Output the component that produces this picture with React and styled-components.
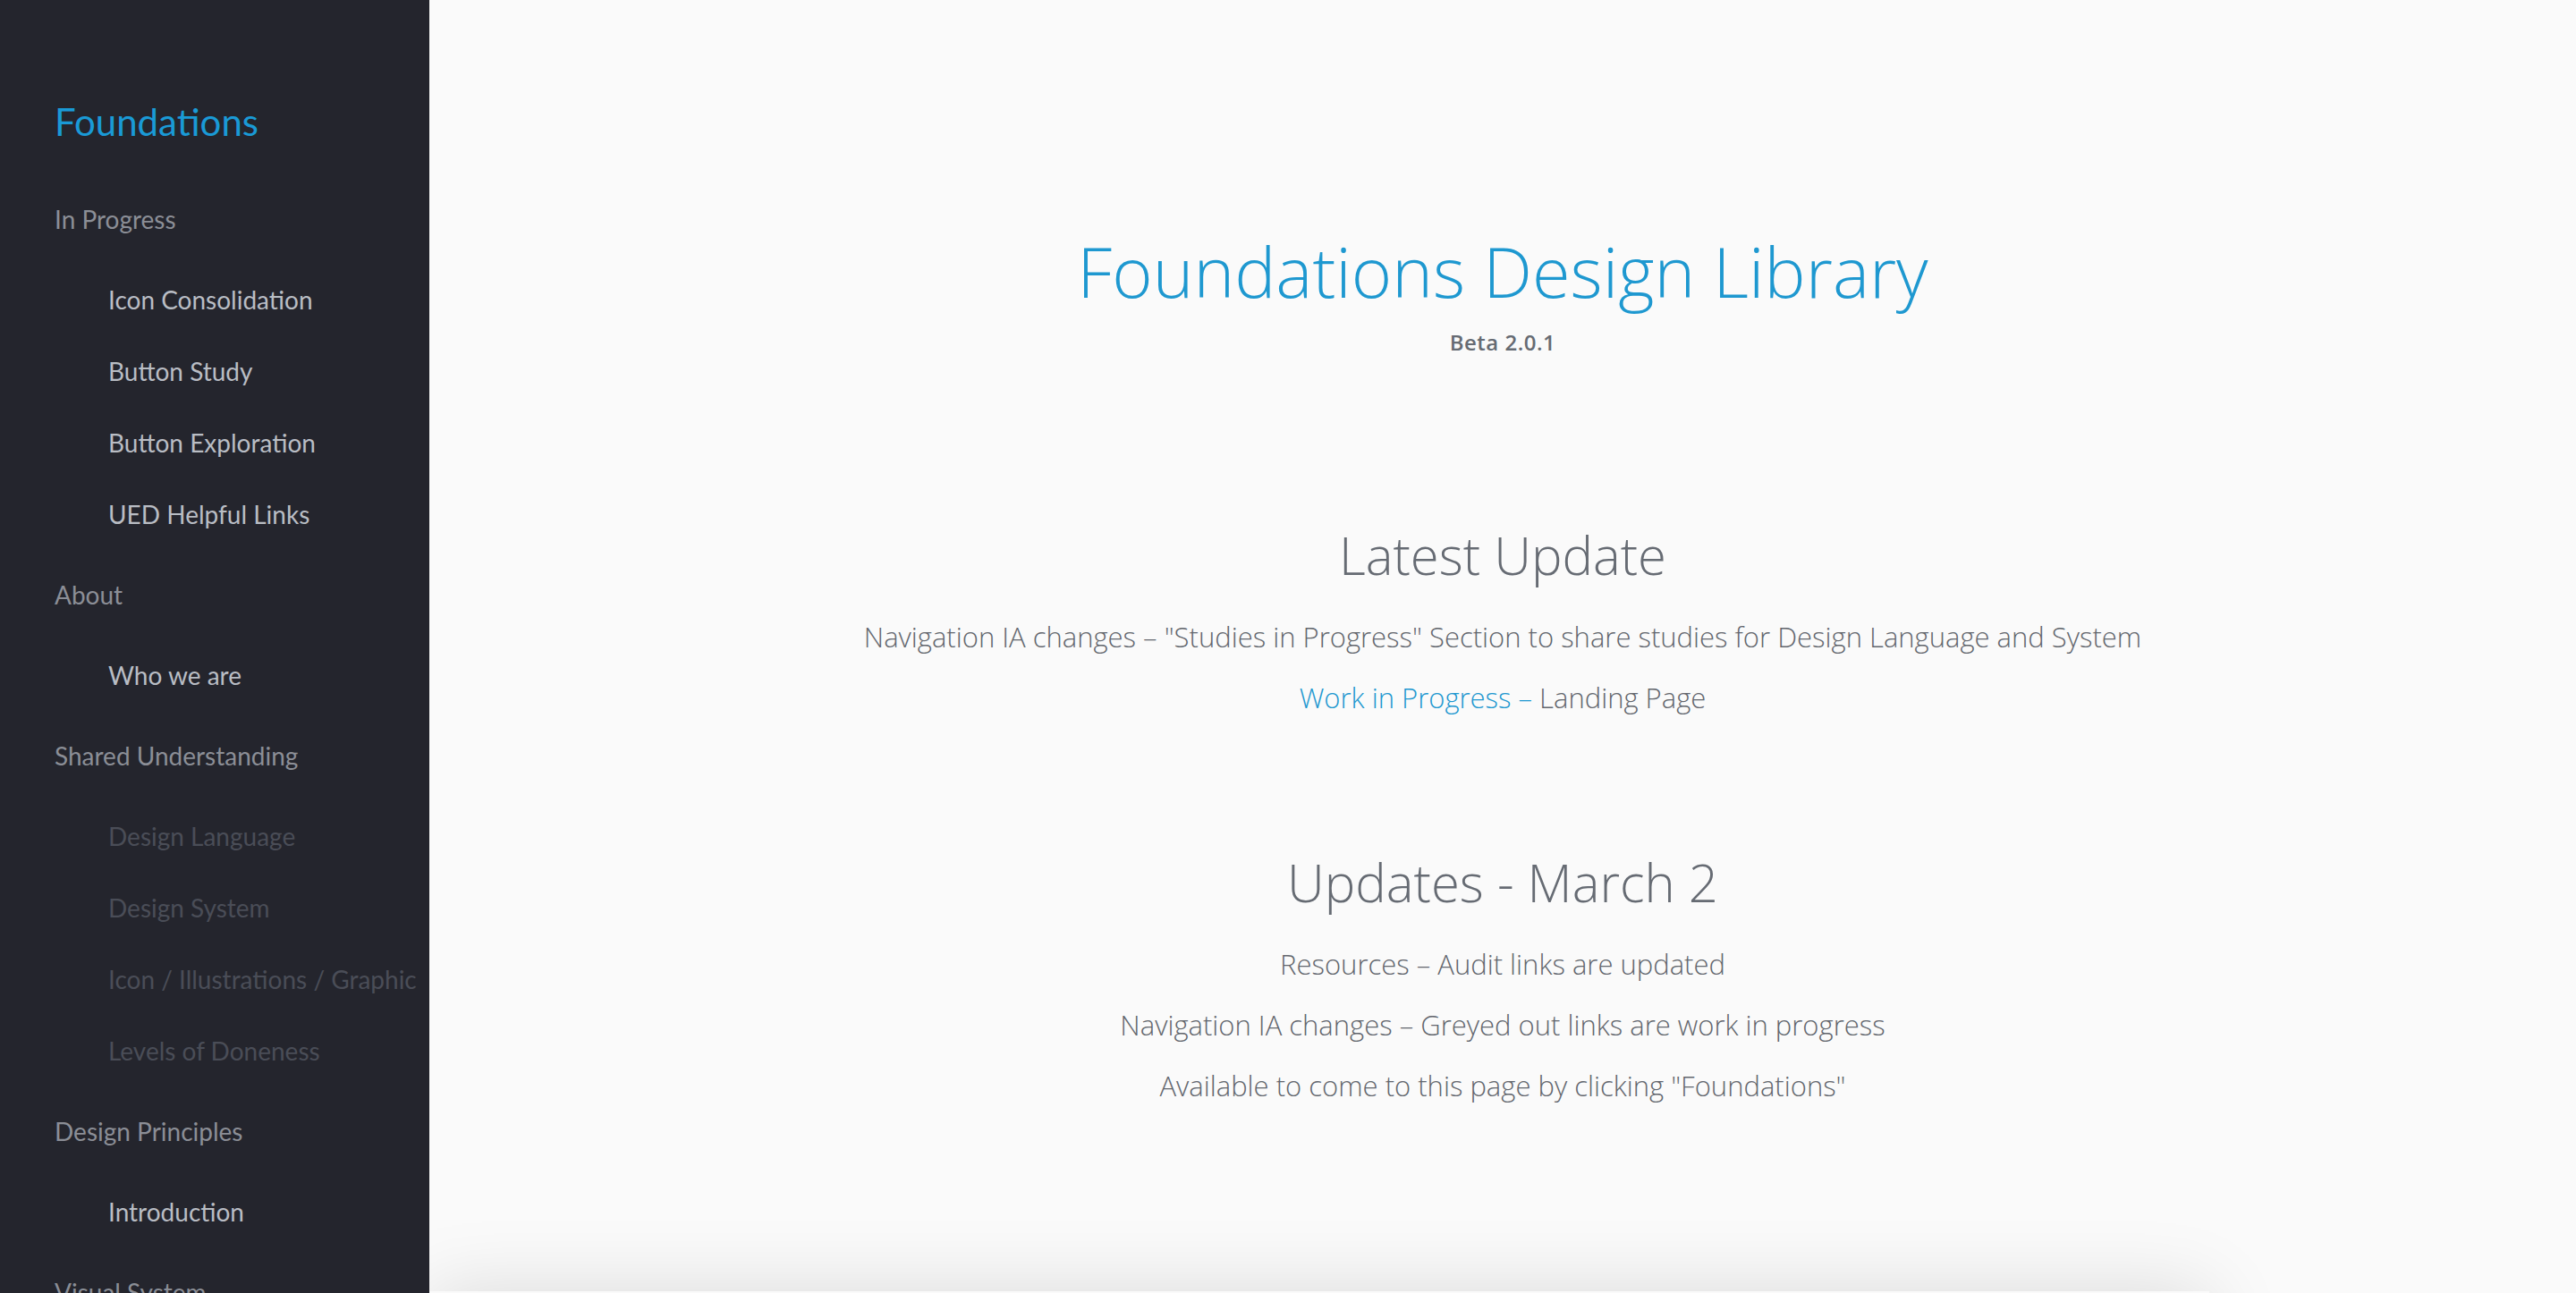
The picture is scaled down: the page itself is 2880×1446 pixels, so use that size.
import React from "react";
import styled, { createGlobalStyle } from "styled-components";

const Global = createGlobalStyle`
  html, body { margin: 0; padding: 0; }
  body { background: #fafafa; font-family: "Open Sans", Lato, sans-serif; }
  * { box-sizing: border-box; }
`;

const Layout = styled.div`
  display: flex;
  width: 100%;
  height: 100vh;
  overflow: hidden;
`;

const Sidebar = styled.nav`
  flex: 0 0 480px;
  height: 100%;
  overflow: hidden;
  background: #24252d;
  padding: 106px 0 0 61px;
  position: relative;
  z-index: 1;
`;

const Brand = styled.div`
  font-family: Lato, "Open Sans", sans-serif;
  font-size: 42px;
  line-height: 60px;
  color: #1a9ad6;
  margin-bottom: 29px;
`;

const NavGroup = styled.div`
  display: flex;
  flex-direction: column;
`;

const NavHeader = styled.div`
  font-family: Lato, "Open Sans", sans-serif;
  font-size: 28px;
  line-height: 100px;
  color: #8b8e96;
  white-space: nowrap;
`;

const NavItem = styled.div`
  font-family: Lato, "Open Sans", sans-serif;
  font-size: 28px;
  line-height: 80px;
  padding-left: 60px;
  white-space: nowrap;
  color: ${(p) => (p.$disabled ? "#4a4d57" : "#b9bdc4")};
`;

const Main = styled.main`
  flex: 1;
  height: 100%;
  overflow: hidden;
  display: flex;
  flex-direction: column;
  align-items: center;
  padding-top: 258px;
  font-family: "Open Sans", Lato, sans-serif;
`;

const Title = styled.h1`
  margin: 0;
  font-size: 77.5px;
  line-height: 90px;
  font-weight: 300;
  color: #1e98d0;
`;

const Version = styled.div`
  margin-top: 20px;
  font-size: 24px;
  line-height: 30px;
  font-weight: 600;
  letter-spacing: 0.5px;
  color: #666b73;
`;

const Section = styled.section`
  display: flex;
  flex-direction: column;
  align-items: center;
  margin-top: ${(p) => p.$gap}px;
`;

const SectionTitle = styled.h2`
  margin: 0 0 22px;
  font-size: 58px;
  line-height: 70px;
  font-weight: 300;
  color: #666b73;
`;

const Line = styled.p`
  margin: 0;
  font-size: 31px;
  line-height: 68px;
  font-weight: 300;
  color: #63676e;
  white-space: nowrap;
`;

const Link = styled.span`
  color: #1e98d0;
`;

const Card = styled.div`
  flex: 0 0 auto;
  align-self: flex-start;
  width: 1990px;
  height: 400px;
  margin-top: 196px;
  background: #fafafa;
  box-shadow: 0 0 80px rgba(0, 0, 0, 0.13);
`;

const nav = [
  { header: "In Progress", items: [["Icon Consolidation"], ["Button Study"], ["Button Exploration"], ["UED Helpful Links"]] },
  { header: "About", items: [["Who we are"]] },
  {
    header: "Shared Understanding",
    items: [
      ["Design Language", true],
      ["Design System", true],
      ["Icon / Illustrations / Graphic", true],
      ["Levels of Doneness", true],
    ],
  },
  { header: "Design Principles", items: [["Introduction"]] },
  { header: "Visual System", items: [] },
];

export default function App() {
  return (
    <>
      <Global />
      <Layout>
        <Sidebar>
          <Brand>Foundations</Brand>
          {nav.map((g) => (
            <NavGroup key={g.header}>
              <NavHeader>{g.header}</NavHeader>
              {g.items.map(([label, disabled]) => (
                <NavItem key={label} $disabled={disabled}>
                  {label}
                </NavItem>
              ))}
            </NavGroup>
          ))}
        </Sidebar>
        <Main>
          <Title>Foundations Design Library</Title>
          <Version>Beta 2.0.1</Version>
          <Section $gap={188}>
            <SectionTitle>Latest Update</SectionTitle>
            <Line>Navigation IA changes – "Studies in Progress" Section to share studies for Design Language and System</Line>
            <Line>
              <Link>Work in Progress –</Link> Landing Page
            </Line>
          </Section>
          <Section $gap={138}>
            <SectionTitle>Updates - March 2</SectionTitle>
            <Line>Resources – Audit links are updated</Line>
            <Line>Navigation IA changes – Greyed out links are work in progress</Line>
            <Line>Available to come to this page by clicking "Foundations"</Line>
          </Section>
          <Card />
        </Main>
      </Layout>
    </>
  );
}
